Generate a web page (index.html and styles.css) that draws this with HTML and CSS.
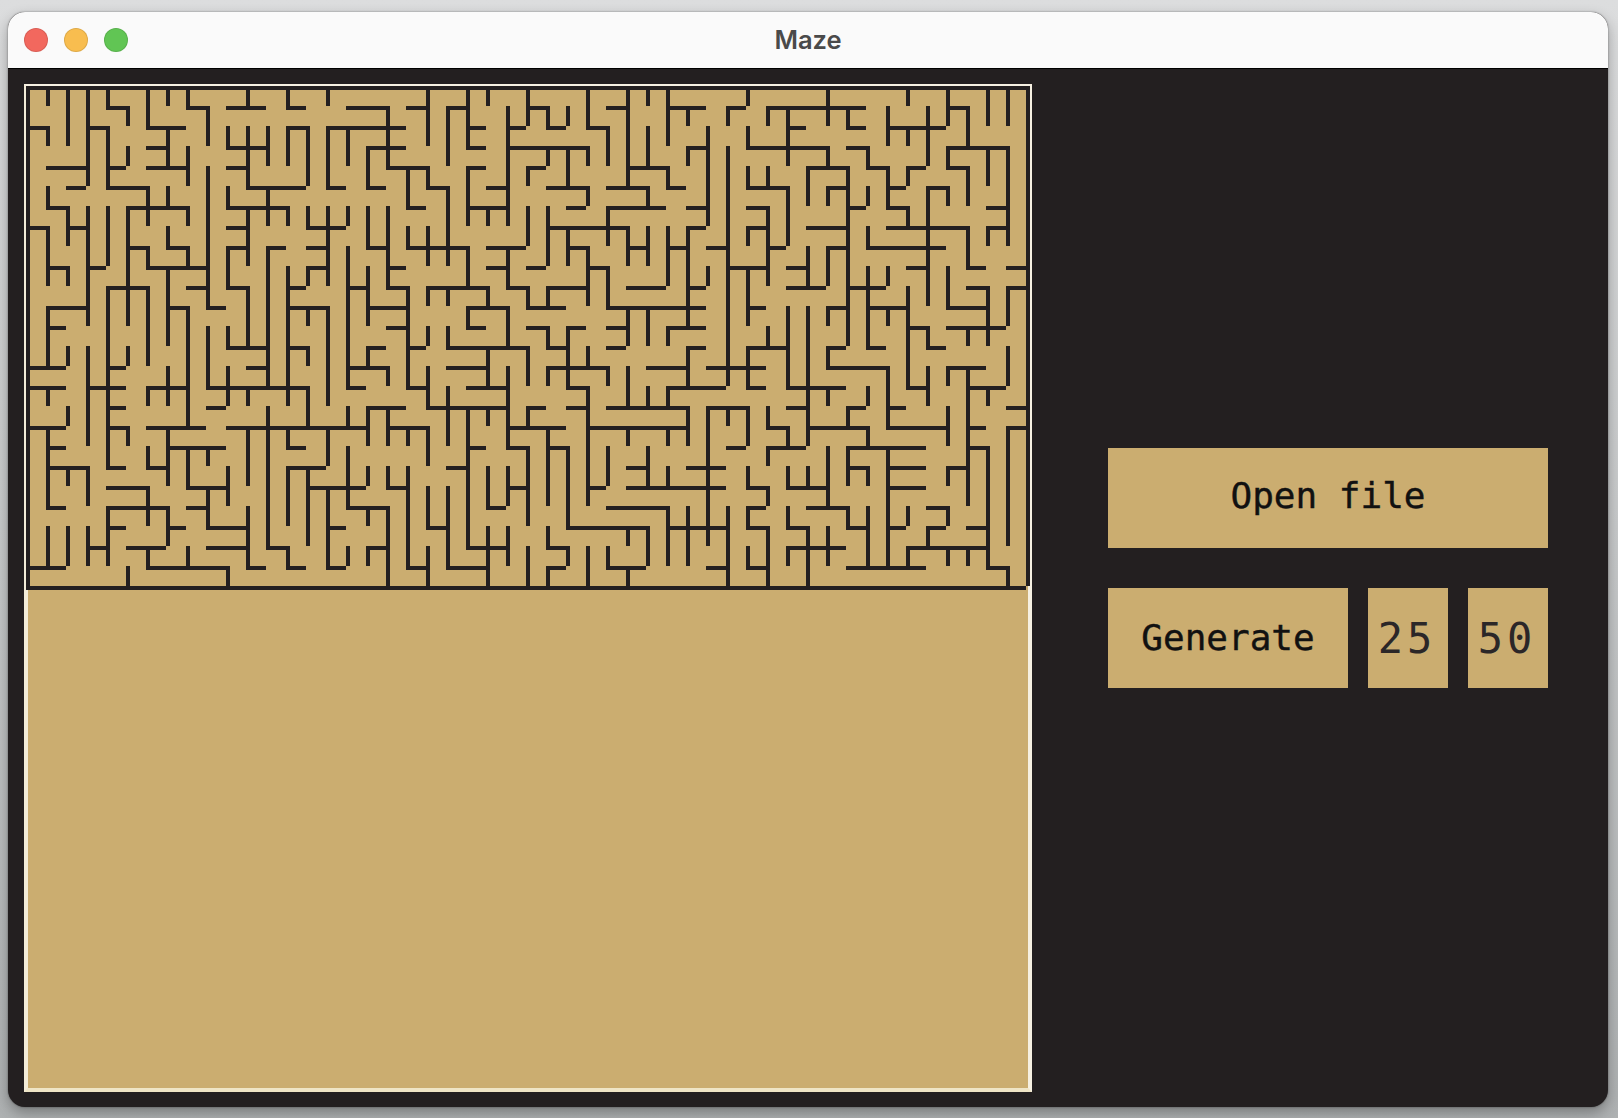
FILE: index.html
```html
<!DOCTYPE html>
<html lang="en">
<head>
  <meta charset="UTF-8">
  <meta name="viewport" content="width=device-width, initial-scale=1.0">
  <title>Maze</title>
  <link rel="stylesheet" href="styles.css">
</head>
<body>
  <div class="window">
    <div class="titlebar">
      <div class="lights">
        <span class="light red"></span>
        <span class="light yellow"></span>
        <span class="light green"></span>
      </div>
      <div class="title">Maze</div>
    </div>

    <div class="content">
      <div class="board">
        <!-- 50 x 25 cells, one unit = one cell. Walls start 2px before their grid point -->
        <svg class="maze" viewBox="0 0 1000 500">
          <g transform="translate(-2 0) scale(20)">
            <path d="M0 0h50
              M4 1h1M8 1h1M10 1h2M13 1h1M16 1h2M19 1h1M21 1h1M25 1h1M29 1h1M32 1h2M35 1h1M37 1h5M46 1h1
              M0 2h1M3 2h1M6 2h2M13 2h1M15 2h4M22 2h1M24 2h1M26 2h1M28 2h1M38 2h1M41 2h1M43 2h3
              M6 3h1M10 3h2M17 3h2M22 3h1M24 3h4M33 3h1M36 3h4M41 3h1M46 3h3
              M1 4h2M4 4h1M6 4h2M10 4h1M18 4h2M22 4h1M25 4h1M30 4h2M39 4h2M42 4h1M44 4h1M46 4h1
              M2 5h1M4 5h2M11 5h3M15 5h1M17 5h1M20 5h1M23 5h1M26 5h2M29 5h2M32 5h1M36 5h2M40 5h1M43 5h1M45 5h1
              M1 6h1M5 6h3M10 6h3M19 6h1M22 6h2M27 6h1M29 6h3M33 6h1M36 6h1M41 6h1M43 6h1M48 6h1
              M0 7h1M2 7h1M10 7h1M14 7h2M26 7h4M33 7h1M36 7h1M39 7h2M43 7h4M48 7h1
              M5 8h1M7 8h1M10 8h1M12 8h1M14 8h1M17 8h1M19 8h3M23 8h2M27 8h1M30 8h1M32 8h1M34 8h1M37 8h1M40 8h1M42 8h4
              M1 9h1M3 9h1M6 9h3M14 9h1M18 9h1M23 9h1M25 9h1M28 9h1M35 9h2M38 9h1M44 9h1M47 9h1M49 9h1
              M4 10h2M8 10h1M10 10h1M13 10h1M16 10h1M18 10h1M20 10h3M24 10h1M26 10h2M30 10h2M33 10h1M38 10h2M41 10h2M47 10h1M49 10h1
              M1 11h2M7 11h1M9 11h1M13 11h2M17 11h2M22 11h2M25 11h2M29 11h5M36 11h1M40 11h1M42 11h2M46 11h2
              M1 12h1M18 12h1M22 12h1M25 12h1M27 12h1M29 12h1M32 12h2M44 12h1M46 12h3
              M10 13h2M13 13h1M17 13h1M19 13h1M21 13h4M26 13h1M29 13h1M33 13h1M36 13h2M40 13h1M42 13h1M45 13h1
              M0 14h2M4 14h1M11 14h1M16 14h2M21 14h2M26 14h3M31 14h2M34 14h3M40 14h3M46 14h2
              M0 15h2M3 15h2M6 15h2M9 15h5M16 15h1M19 15h1M22 15h2M27 15h1M32 15h3M36 15h1M38 15h3M44 15h1M47 15h2
              M4 16h1M9 16h1M17 16h2M20 16h4M25 16h1M27 16h1M29 16h4M34 16h2M38 16h1M41 16h1M43 16h1M49 16h1
              M0 17h2M4 17h1M6 17h3M10 17h7M18 17h2M24 17h3M28 17h5M37 17h1M39 17h3M43 17h3M47 17h1M49 17h1
              M1 18h1M7 18h3M13 18h1M22 18h1M24 18h1M26 18h1M35 18h1M37 18h2M41 18h4M47 18h1
              M1 19h2M4 19h1M6 19h1M13 19h2M21 19h1M30 19h1M33 19h2M41 19h1M43 19h2M46 19h1
              M4 20h2M8 20h2M14 20h3M18 20h1M24 20h1M28 20h1M30 20h5M36 20h1M38 20h2M43 20h2
              M1 21h1M4 21h3M8 21h1M16 21h2M23 21h1M29 21h3M36 21h1M39 21h2M45 21h1
              M4 22h1M7 22h1M9 22h2M15 22h1M20 22h1M27 22h4M32 22h3M36 22h1M38 22h1M41 22h1M43 22h1M45 22h1M47 22h1
              M3 23h1M5 23h2M9 23h2M12 23h1M17 23h1M22 23h2M26 23h1M38 23h3M44 23h4
              M0 24h2M6 24h4M11 24h1M13 24h1M15 24h1M19 24h1M21 24h2M26 24h1M29 24h2M34 24h1M36 24h1M41 24h4M48 24h1
              M0 25h50"/>
          </g>
          <g transform="translate(0 -2) scale(20)">
            <path d="M0 0v25
              M1 0v1M1 2v1M1 5v1M1 7v3M1 11v3M1 15v1M1 17v4M1 22v2
              M2 0v3M2 6v2M2 9v1M2 13v1M2 16v1M2 19v1M2 22v2
              M3 0v5M3 6v6M3 13v5M3 19v2M3 22v2
              M4 0v1M4 2v3M4 6v3M4 10v9M4 21v3
              M5 1v1M5 3v1M5 6v6M5 13v1M5 17v1M5 24v1
              M6 0v2M6 5v2M6 8v1M6 10v4M6 15v1M6 18v1M6 20v2M6 23v1
              M7 0v1M7 2v2M7 5v1M7 7v1M7 9v4M7 14v2M7 17v3M7 21v2
              M8 0v1M8 3v2M8 6v1M8 8v1M8 11v6M8 18v2M8 23v1
              M9 1v2M9 4v7M9 12v3M9 18v1M9 20v2
              M10 2v1M10 5v1M10 8v2M10 12v1M10 14v2M10 19v2M10 24v1
              M11 0v1M11 2v3M11 6v3M11 10v3M11 15v1M11 17v3M11 21v3
              M12 2v2M12 5v2M12 8v7M12 16v7
              M13 0v1M13 2v2M13 6v1M13 9v7M13 17v1M13 19v3M13 23v1
              M14 2v3M14 6v1M14 9v1M14 11v1M14 13v1M14 15v2M14 19v4
              M15 0v1M15 2v3M15 6v4M15 11v5M15 17v2M15 20v4
              M16 2v2M16 6v1M16 8v7M16 16v1M16 18v3M16 23v1
              M17 3v2M17 6v2M17 9v3M17 13v1M17 16v2M17 19v1M17 21v1M17 23v1
              M18 1v3M18 6v4M18 14v1M18 16v2M18 19v1M18 21v4
              M19 4v2M19 7v1M19 10v5M19 17v1M19 19v5
              M20 0v3M20 4v1M20 7v2M20 10v1M20 12v1M20 14v2M20 17v2M20 20v2M20 23v2
              M21 1v3M21 5v4M21 10v1M21 12v1M21 15v3M21 20v4
              M22 0v3M22 4v3M22 8v2M22 11v1M22 16v7
              M23 0v1M23 6v1M23 10v1M23 13v2M23 16v1M23 19v2M23 22v3
              M24 1v6M24 8v2M24 11v2M24 14v4M24 19v2M24 22v2
              M25 0v2M25 4v1M25 6v2M25 10v1M25 13v2M25 16v1M25 18v4M25 23v2
              M26 1v1M26 3v1M26 6v3M26 10v1M26 12v1M26 14v1M26 17v4M26 22v1M26 24v1
              M27 1v1M27 3v2M27 7v2M27 12v3M27 18v4M27 23v1
              M28 0v2M28 3v1M28 5v1M28 8v3M28 13v1M28 15v6M28 23v2
              M29 2v2M29 6v2M29 9v2M29 14v1M29 18v2M29 23v1
              M30 0v5M30 7v2M30 11v2M30 14v2M30 17v1M30 22v1M30 24v1
              M31 0v1M31 2v2M31 5v1M31 7v2M31 11v2M31 15v1M31 18v2M31 22v2
              M32 0v3M32 4v1M32 7v3M32 12v1M32 15v1M32 17v1M32 19v1M32 21v3
              M33 1v1M33 3v1M33 7v5M33 13v2M33 16v2M33 21v3
              M34 2v5M34 9v1M34 16v7
              M35 1v1M35 3v12M35 16v1M35 21v4
              M36 0v1M36 2v1M36 4v1M36 7v1M36 9v3M36 13v2M36 16v2M36 19v1M36 21v1M36 23v1
              M37 1v1M37 4v1M37 6v4M37 12v1M37 16v1M37 18v1M37 20v1M37 22v3
              M38 1v3M38 5v3M38 11v4M38 17v1M38 19v1M38 21v1M38 23v1
              M39 4v2M39 8v2M39 11v7M39 19v1M39 22v3
              M40 0v2M40 3v1M40 5v1M40 8v2M40 11v1M40 13v1M40 15v1M40 18v3M40 22v2
              M41 1v1M41 4v9M41 16v1M41 18v2M41 21v1
              M42 3v1M42 5v1M42 7v1M42 9v4M42 15v1M42 17v1M42 19v1M42 21v3
              M43 1v2M43 4v2M43 9v1M43 11v1M43 14v3M43 18v6
              M44 0v1M44 2v1M44 4v1M44 6v1M44 10v5M44 21v1M44 23v1
              M45 1v3M45 5v6M45 12v1M45 14v2M45 22v1
              M46 0v2M46 3v1M46 5v1M46 9v2M46 14v1M46 16v2M46 19v1M46 21v1M46 23v1
              M47 1v2M47 4v2M47 7v2M47 12v1M47 14v7M47 23v1
              M48 0v2M48 3v2M48 7v1M48 10v3M48 15v1M48 18v6
              M49 0v2M49 3v5M49 10v2M49 13v2M49 17v6M49 24v1
              M50 0v25"/>
          </g>
        </svg>
      </div>

      <div class="controls">
        <button class="btn open">Open file</button>
        <div class="gen-row">
          <button class="btn">Generate</button>
          <div class="num">25</div>
          <div class="num">50</div>
        </div>
      </div>
    </div>
  </div>
</body>
</html>
```

FILE: styles.css
```css
* {
  box-sizing: border-box;
}

html, body {
  margin: 0;
  height: 100%;
}

body {
  width: 1618px;
  height: 1118px;
  overflow: hidden;
  padding: 12px 10px 11px 8px;
  background: linear-gradient(180deg, #dcddde 0%, #c9cbcc 45%, #aeb1b2 100%);
}

.window {
  height: 100%;
  display: flex;
  flex-direction: column;
  border-radius: 17px;
  overflow: hidden;
  background: #231f20;
  box-shadow: 0 0 2px rgba(0, 0, 0, 0.45), 0 6px 14px rgba(0, 0, 0, 0.3);
}

.titlebar {
  height: 57px;
  flex: none;
  display: grid;
  grid-template-columns: 1fr auto 1fr;
  align-items: center;
  background: #fafafa;
  border-bottom: 1px solid #000;
}

.lights {
  display: flex;
  gap: 16px;
  padding-left: 16px;
}

.light {
  width: 24px;
  height: 24px;
  border-radius: 50%;
  border: 1px solid rgba(0, 0, 0, 0.1);
}

.red { background: #f2685e; }
.yellow { background: #f8bd4f; }
.green { background: #61c554; }

.title {
  font-family: Inter, "Liberation Sans", sans-serif;
  font-size: 25.5px;
  font-weight: 600;
  color: #4a4a4a;
  padding-bottom: 2px;
}

.content {
  flex: 1;
  display: flex;
  padding: 15px 16px;
}

.board {
  width: 1008px;
  height: 1008px;
  flex: none;
  background: #cbad70;
  border: 4px solid;
  border-color: #f6f0e2 #f6f0e2 #efe5c6 #f3ecd8;
}

.maze {
  display: block;
  width: 1000px;
  height: 500px;
  overflow: visible;
  shape-rendering: crispEdges;
}

.maze path {
  fill: none;
  stroke: #231f20;
  stroke-width: 0.2;
}

.controls {
  width: 440px;
  margin-left: 76px;
  padding-top: 364px;
  display: flex;
  flex-direction: column;
  gap: 40px;
}

.gen-row {
  display: flex;
  gap: 20px;
}

.btn, .num {
  height: 100px;
  display: flex;
  align-items: center;
  justify-content: center;
  background: #cbad70;
  border: none;
  padding: 0 0 2px;
  font-family: "DejaVu Sans Mono", "Liberation Mono", monospace;
  font-size: 36px;
}

.btn {
  color: #111;
  cursor: pointer;
  -webkit-text-stroke: 0.4px #111;
}

.open {
  padding-bottom: 6px;
}

.gen-row .btn {
  width: 240px;
}

.num {
  width: 80px;
  padding: 0 2px 0 0;
  color: #2b2728;
  font-size: 42px;
  letter-spacing: 4px;
}
```
